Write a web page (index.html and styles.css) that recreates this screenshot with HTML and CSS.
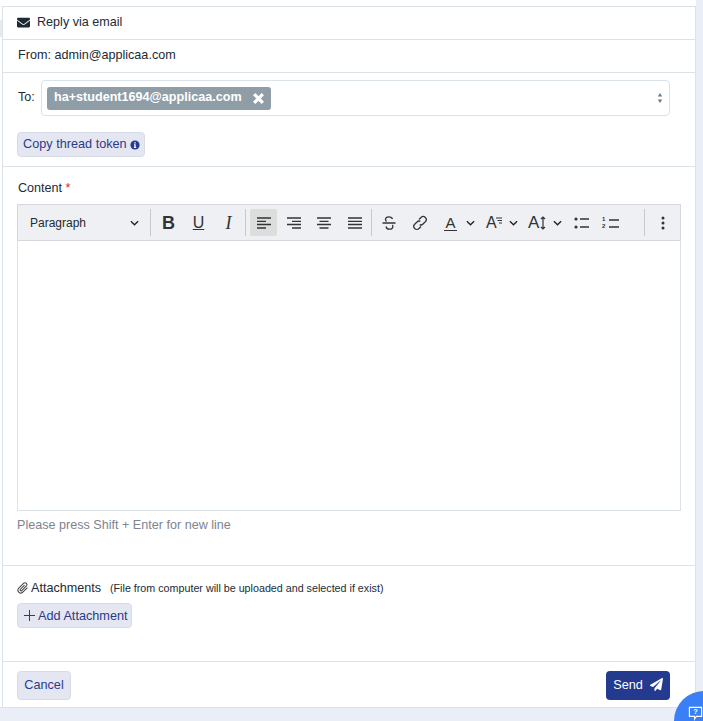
FILE: index.html
```html
<!DOCTYPE html>
<html lang="en">
<head>
<meta charset="utf-8">
<title>Reply via email</title>
<link rel="stylesheet" href="styles.css">
</head>
<body>
<div class="sheet">
  <main class="panel">
    <header class="row head">
      <svg class="ico-mail" viewBox="0 0 512 512"><path d="M502.3 190.8c3.9-3.1 9.7-.2 9.7 4.7V400c0 26.5-21.5 48-48 48H48c-26.5 0-48-21.5-48-48V195.6c0-5 5.7-7.8 9.7-4.7 22.4 17.4 52.1 39.5 154.1 113.6 21.1 15.4 56.7 47.8 92.2 47.6 35.7.3 72-32.8 92.3-47.6 102-74.1 131.6-96.3 154-113.7zM256 320c23.2.4 56.6-29.2 73.4-41.4 132.7-96.3 142.8-104.7 173.4-128.7 5.8-4.5 9.2-11.5 9.2-18.9v-19c0-26.5-21.5-48-48-48H48C21.5 64 0 85.5 0 112v19c0 7.4 3.4 14.3 9.2 18.9 30.6 23.9 40.7 32.4 173.4 128.7 16.8 12.2 50.2 41.8 73.4 41.4z"/></svg>
      <span>Reply via email</span>
    </header>
    <div class="row from">From: admin@applicaa.com</div>
    <section class="recipients">
      <div class="to-line">
        <label class="to-label">To:</label>
        <div class="select">
          <span class="chip">ha+student1694@applicaa.com
            <svg class="chip-x" viewBox="0 0 12 12"><path d="M2 2l8 8M10 2l-8 8"/></svg>
          </span>
          <svg class="spin" viewBox="0 0 6 12"><path d="M3 1l2.2 3.4H.8zM3 11L.8 7.6h4.4z"/></svg>
        </div>
      </div>
      <button class="btn copy">Copy thread token
        <svg class="info" viewBox="0 0 10 10"><circle cx="5" cy="5" r="4.6"/><path class="info-i" d="M4.2 2.2h1.5v1.3H4.2zM4 4.3h1.7v2.6h.5v1H3.9v-1h.4V5.300h-.3z"/></svg>
      </button>
    </section>
    <section class="content">
      <div class="label">Content <span class="req">*</span></div>
      <div class="toolbar">
        <div class="para">Paragraph
          <svg class="chev" viewBox="0 0 10 6"><path d="M1 1l4 4 4-4"/></svg>
        </div>
        <i class="sep"></i>
        <span class="tb bold">B</span>
        <span class="tb under"><u>U</u></span>
        <span class="tb ital">I</span>
        <i class="sep sep2"></i>
        <span class="tb on"><svg class="ti" viewBox="0 0 16 14"><path d="M1 2h14M1 5.300h9M1 8.500h14M1 12h9"/></svg></span>
        <span class="tb"><svg class="ti" viewBox="0 0 16 14"><path d="M1 2h14M6 5.300h9M1 8.500h14M6 12h9"/></svg></span>
        <span class="tb"><svg class="ti" viewBox="0 0 16 14"><path d="M1 2h14M3.500 5.300h9M1 8.500h14M3.500 12h9"/></svg></span>
        <span class="tb justify"><svg class="ti" viewBox="0 0 16 14"><path d="M1 2h14M1 5.300h14M1 8.500h14M1 12h14"/></svg></span>
        <i class="sep sep3"></i>
        <span class="tb"><svg class="ti" viewBox="0 0 16 16"><path d="M1.500 8h13M11.500 4c-.5-1.500-2-2.200-3.500-2.200-2 0-3.500 1-3.500 2.800 0 .8.3 1.400 1 2M5 11.500c.4 1.700 1.700 2.700 3.400 2.700 2 0 3.400-1 3.400-2.800 0-.5-.1-1-.4-1.400"/></svg></span>
        <span class="tb link"><svg class="ti" viewBox="0 0 16 16"><path d="M7 4.500l2-2a3 3 0 0 1 4.300 4.300L11 9c-1 1-2.300 1.200-3.300.6M9 11.500l-2 2A3 3 0 0 1 2.700 9.200L5 7c1-1 2.300-1.200 3.300-.6"/></svg></span>
        <span class="tb wide w1"><span class="a-under">A</span><svg class="chev" viewBox="0 0 10 6"><path d="M1 1l4 4 4-4"/></svg></span>
        <span class="tb wide w2"><span class="a-plain">A</span><svg class="lines" viewBox="0 0 6 7"><path d="M0 1h6M1.500 3.500H6M3 6h3"/></svg><svg class="chev" viewBox="0 0 10 6"><path d="M1 1l4 4 4-4"/></svg></span>
        <span class="tb wide w3"><span class="a-big">A</span><svg class="updown" viewBox="0 0 6 14"><path d="M3 1v12M1 3l2-2 2 2M1 11l2 2 2-2"/></svg><svg class="chev" viewBox="0 0 10 6"><path d="M1 1l4 4 4-4"/></svg></span>
        <span class="tb"><svg class="ti" viewBox="0 0 16 14"><circle class="fill" cx="2" cy="3" r="1.600"/><circle class="fill" cx="2" cy="11" r="1.600"/><path d="M6 3h9M6 11h9"/></svg></span>
        <span class="tb numlist"><span class="nums"><b>1</b><b>2</b></span><svg class="nlines" viewBox="0 0 11 14"><path d="M1 4h10M1 11h10"/></svg></span>
        <i class="sep sep4"></i>
        <span class="tb dots"><svg class="dots-i" viewBox="0 0 4 14"><circle cx="2" cy="2" r="1.500"/><circle cx="2" cy="7" r="1.500"/><circle cx="2" cy="12" r="1.500"/></svg></span>
      </div>
      <div class="editor"></div>
      <p class="hint">Please press Shift + Enter for new line</p>
    </section>
    <section class="attach">
      <div class="attach-head">
        <svg class="clip" viewBox="0 0 14 14"><path d="M12.200 6.500l-5.400 5.400a3.300 3.300 0 0 1-4.700-4.700l5.800-5.800a2.200 2.200 0 0 1 3.100 3.100L5.300 10.200a1.100 1.100 0 0 1-1.500-1.500l5-5"/></svg>
        <span class="attach-title">Attachments</span>
        <small class="attach-note">(File from computer will be uploaded and selected if exist)</small>
      </div>
      <button class="btn add"><svg class="plus" viewBox="0 0 11 11"><path d="M5.500 0v11M0 5.500h11"/></svg>Add Attachment</button>
    </section>
    <footer class="foot">
      <button class="btn cancel">Cancel</button>
      <button class="send">Send
        <svg class="plane" viewBox="0 0 512 512"><path d="M476 3.200L12.500 270.600c-18.100 10.400-15.800 35.600 2.200 43.200L121 358.400l287.300-253.200c5.500-4.900 13.300 2.600 8.600 8.300L176 407v80.500c0 23.600 28.500 32.900 42.500 15.800L282 426l124.600 52.200c14.200 6 30.400-2.900 33-18.200l72-432C515 7.800 493.300-6.800 476 3.200z"/></svg>
      </button>
    </footer>
  </main>
</div>
<div class="help-clip">
  <div class="help">
    <svg class="help-i" viewBox="0 0 16 16"><path d="M1.500 1.500h13v9.500H9l-2 3v-3H1.500z"/><text x="8" y="9" class="help-q">?</text></svg>
  </div>
</div>
</body>
</html>
```
FILE: styles.css
```css
* { box-sizing: border-box; }
html, body { margin: 0; height: 721px; overflow: hidden; }
body {
  background: #eaeef7;
  font-family: "Liberation Sans", Arial, sans-serif;
  font-size: 12.6px;
  color: #212b36;
  position: relative;
}
body::before {
  content: "";
  position: absolute;
  left: 0;
  top: 20px;
  width: 2px;
  height: 17px;
  background: #e9e9e9;
}
.sheet {
  width: 696px;
  background: #fff;
  padding: 6px 0 0 2px;
  height: 708px;
}
.sheet::after {
  content: "";
  position: absolute;
  left: 0;
  right: 0;
  top: 707px;
  height: 1px;
  background: #dbe3e8;
}
.panel {
  height: 701px;
  border: 1px solid #dbe3e8;
  border-bottom: 0;
  display: flex;
  flex-direction: column;
  background: #fff;
}
.row { display: flex; align-items: center; padding: 0 0 2px 14px; border-bottom: 1px solid #dbe3e8; }
.head { height: 33px; gap: 7px; }
.ico-mail { width: 13px; height: 13px; fill: #1f2a37; }
.from { height: 33px; padding-left: 15px; }
.recipients { height: 94px; border-bottom: 1px solid #dbe3e8; padding: 7px 14px; }
.to-line { display: flex; align-items: center; height: 36px; }
.to-label { width: 23px; margin: 0 0 2px 1px; }
.select {
  width: 629px;
  height: 36px;
  border: 1px solid #dbe3e8;
  border-radius: 4px;
  display: flex;
  align-items: center;
  justify-content: space-between;
  padding: 0 6px 0 5px;
}
.chip {
  height: 23px;
  background: #8f9ea6;
  color: #fff;
  font-weight: 700;
  border-radius: 3px;
  padding: 0 6px 2px 7px;
  display: flex;
  align-items: center;
  gap: 10px;
  white-space: nowrap;
}
.chip-x { width: 13px; height: 13px; fill: none; stroke: #fff; stroke-width: 3; margin-top: 2px; }
.spin { width: 6px; height: 12px; fill: #6b7a8a; }
.btn {
  font: inherit;
  font-size: 12.700px;
  color: #2b3a8c;
  background: #e4e7f1;
  border: 1px solid #d6dbe8;
  border-radius: 4px;
  display: flex;
  align-items: center;
  padding: 0;
  white-space: nowrap;
}
.copy { margin-top: 16px; width: 128px; height: 25px; padding: 0 0 2px 5px; gap: 3px; }
.info { width: 10px; height: 10px; margin-top: 2px; }
.info circle { fill: #263b92; }
.info-i { fill: #fff; }
.content {
  height: 399px;
  border-bottom: 1px solid #dbe3e8;
  padding: 14px 14px 0;
}
.label { height: 23px; line-height: 15px; padding-left: 1px; }
.req { color: #e02424; }
.toolbar {
  width: 664px;
  height: 37px;
  background: #eef0f3;
  border: 1px solid #d5d8df;
  display: flex;
  align-items: center;
  padding-left: 0;
}
.para {
  width: 132px;
  display: flex;
  align-items: center;
  justify-content: space-between;
  padding: 0 11px 0 12px;
  font-size: 12px;
}
.chev { width: 9px; height: 6px; fill: none; stroke: #222; stroke-width: 1.500; flex: none; }
.sep { width: 1px; height: 27px; background: #c6c9cd; flex: none; }
.tb {
  width: 27px;
  height: 27px;
  margin-left: 3px;
  border-radius: 2px;
  display: flex;
  align-items: center;
  justify-content: center;
  flex: none;
  color: #333;
  position: relative;
}
.bold { margin-left: 4px; font-weight: 700; font-size: 18px; padding-top: 2px; }
.under { font-size: 16px; padding-top: 1px; }
.ital { font-family: "Liberation Serif", serif; font-style: italic; font-size: 18px; padding-top: 2px; }
.sep2 { margin-left: 3px; }
.on { background: #dcdddd; margin-left: 4px; }
.justify { margin-left: 4px; }
.sep3 { margin-left: 3px; }
.link { margin-left: 4px; }
.ti { width: 16px; height: 16px; fill: none; stroke: #333; stroke-width: 1.300; }
.fill { fill: #333; stroke: none; }
.wide { gap: 0; }
.w1 { width: 44px; margin-left: 3px; justify-content: flex-start; padding-left: 8px; }
.w2 { width: 44px; margin-left: 1px; justify-content: flex-start; padding-left: 5px; }
.w3 { width: 39px; margin-left: 1px; justify-content: flex-start; padding-left: 2px; }
.a-under { font-size: 15px; line-height: 15px; border-bottom: 1.500px solid #333; width: 13px; text-align: center; margin-right: 9px; }
.a-plain { font-size: 16px; margin-right: 0; }
.lines { width: 6px; height: 7px; fill: none; stroke: #333; stroke-width: 1; margin: 0 7px 5px -1px; }
.a-big { font-size: 17px; }
.updown { width: 6px; height: 14px; fill: none; stroke: #333; stroke-width: 1.200; margin: 0 7px 0 1px; }
.numlist { margin-left: 2px; }
.nums { display: flex; flex-direction: column; font-size: 6px; line-height: 7px; width: 5px; }
.nums b { display: block; }
.nlines { width: 11px; height: 14px; fill: none; stroke: #333; stroke-width: 1.300; margin-left: 1px; }
.sep4 { margin-left: 20px; }
.dots { margin-left: 4px; }
.dots-i { width: 4px; height: 14px; fill: #333; }
.editor { width: 664px; height: 270px; border: 1px solid #dbe3e8; border-top: 0; }
.hint { margin: 7px 0 0 0; color: #7b8590; line-height: 15px; }
.attach { height: 96px; border-bottom: 1px solid #dbe3e8; padding: 14px 14px 0; }
.attach-head { display: flex; align-items: center; height: 15px; }
.clip { width: 12px; height: 12px; fill: none; stroke: #444; stroke-width: 1.200; margin-right: 2px; }
.attach-title { margin-right: 9px; }
.attach-note { font-size: 10.720px; }
.add { margin-top: 8px; width: 115px; height: 25px; padding-left: 6px; gap: 3px; }
.plus { width: 11px; height: 11px; fill: none; stroke: #2b3a8c; stroke-width: 1; }
.foot {
  flex: 1;
  display: flex;
  justify-content: space-between;
  align-items: flex-start;
  padding: 9px 25px 0 14px;
}
.cancel { width: 54px; height: 29px; justify-content: center; padding-bottom: 2px; }
.send {
  font: inherit;
  font-size: 12.700px;
  width: 64px;
  height: 29px;
  background: #243a8f;
  color: #fff;
  border: 0;
  border-radius: 4px;
  display: flex;
  align-items: center;
  justify-content: center;
  gap: 7px;
  padding: 0 0 2px;
}
.plane { width: 13px; height: 13px; fill: #fff; }
.help-clip {
  position: absolute;
  left: 663px;
  top: 690px;
  width: 40px;
  height: 31px;
  overflow: hidden;
}
.help {
  position: absolute;
  left: 11px;
  top: 1px;
  width: 60px;
  height: 60px;
  border-radius: 50%;
  background: #3a7ff6;
}
.help-i { position: absolute; left: 14px; top: 15px; width: 15px; height: 15px; fill: none; stroke: #fff; stroke-width: 1.200; }
.help-q { font-size: 8px; font-weight: 700; fill: #fff; stroke: none; text-anchor: middle; }
```
